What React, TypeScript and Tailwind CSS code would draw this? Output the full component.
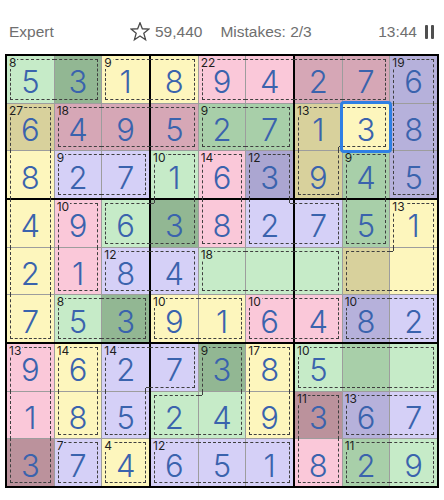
import React from 'react'

type Tone = 'green' | 'yellow' | 'pink' | 'lav'

const DIGITS = [
  '531894276',
  '649527138',
  '827163945',
  '496382751',
  '2184.....',
  '753916482',
  '9627385..',
  '185249367',
  '374651829',
]

// one letter per cage
const CAGES = [
  'AABBCCCCE',
  'FGGGHHIIE',
  'FKKLMNIOE',
  'FPLLMNNOQ',
  'FPRRSSSQQ',
  'FTTUUVVXX',
  'YZaabcddd',
  'YZabbceff',
  'Yghiiiejj',
]

const CAGE_INFO: Record<string, [Tone, number]> = {
  A: ['green', 8], B: ['yellow', 9], C: ['pink', 22], E: ['lav', 19],
  F: ['yellow', 27], G: ['pink', 18], H: ['green', 9], I: ['yellow', 13],
  K: ['lav', 9], L: ['green', 10], M: ['pink', 14], N: ['lav', 12],
  O: ['green', 9], P: ['pink', 10], Q: ['yellow', 13], R: ['lav', 12],
  S: ['green', 18], T: ['green', 8], U: ['yellow', 10], V: ['pink', 10],
  X: ['lav', 10], Y: ['pink', 13], Z: ['yellow', 14], a: ['lav', 14],
  b: ['green', 9], c: ['yellow', 17], d: ['green', 10], e: ['pink', 11],
  f: ['lav', 13], g: ['lav', 7], h: ['yellow', 4], i: ['lav', 12],
  j: ['green', 11],
}

const COLORS: Record<Tone, { base: string; hl: string; same: string }> = {
  green: { base: 'bg-[#c6ebc8]', hl: 'bg-[#a8cfa9]', same: 'bg-[#92b793]' },
  yellow: { base: 'bg-[#fdf6bd]', hl: 'bg-[#d8d19c]', same: 'bg-[#c9c28a]' },
  pink: { base: 'bg-[#fac8d9]', hl: 'bg-[#d6a7b6]', same: 'bg-[#bb929c]' },
  lav: { base: 'bg-[#d5d0f7]', hl: 'bg-[#b6b1db]', same: 'bg-[#aba6d1]' },
}

const SEL = [1, 7]
const LINE = 'absolute border-dashed border-[#3f3f3f]'

function inCage(r: number, c: number, id: string) {
  if (r < 0 || r > 8 || c < 0 || c > 8) return false
  return CAGES[r][c] === id
}

function isFirst(r: number, c: number, id: string) {
  for (let i = 0; i < 81; i++) {
    const rr = Math.floor(i / 9)
    const cc = i % 9
    if (CAGES[rr][cc] === id) return rr === r && cc === c
  }
  return false
}

function CageLines({ r, c, id }: { r: number; c: number; id: string }) {
  const t = !inCage(r - 1, c, id)
  const b = !inCage(r + 1, c, id)
  const l = !inCage(r, c - 1, id)
  const rt = !inCage(r, c + 1, id)

  return (
    <>
      {t && <span className={`${LINE} top-[3px] h-0 border-t ${l ? 'left-[3px]' : '-left-px'} ${rt ? 'right-[3px]' : '-right-px'}`} />}
      {b && <span className={`${LINE} bottom-[3px] h-0 border-b ${l ? 'left-[3px]' : '-left-px'} ${rt ? 'right-[3px]' : '-right-px'}`} />}
      {l && <span className={`${LINE} left-[3px] w-0 border-l ${t ? 'top-[3px]' : '-top-px'} ${b ? 'bottom-[3px]' : '-bottom-px'}`} />}
      {rt && <span className={`${LINE} right-[3px] w-0 border-r ${t ? 'top-[3px]' : '-top-px'} ${b ? 'bottom-[3px]' : '-bottom-px'}`} />}

      {/* inner corners where the cage turns */}
      {!t && !l && !inCage(r - 1, c - 1, id) && (
        <>
          <span className={`${LINE} top-[3px] -left-px w-[4px] h-0 border-t`} />
          <span className={`${LINE} left-[3px] -top-px h-[4px] w-0 border-l`} />
        </>
      )}
      {!t && !rt && !inCage(r - 1, c + 1, id) && (
        <>
          <span className={`${LINE} top-[3px] -right-px w-[4px] h-0 border-t`} />
          <span className={`${LINE} right-[3px] -top-px h-[4px] w-0 border-r`} />
        </>
      )}
      {!b && !l && !inCage(r + 1, c - 1, id) && (
        <>
          <span className={`${LINE} bottom-[3px] -left-px w-[4px] h-0 border-b`} />
          <span className={`${LINE} left-[3px] -bottom-px h-[4px] w-0 border-l`} />
        </>
      )}
      {!b && !rt && !inCage(r + 1, c + 1, id) && (
        <>
          <span className={`${LINE} bottom-[3px] -right-px w-[4px] h-0 border-b`} />
          <span className={`${LINE} right-[3px] -bottom-px h-[4px] w-0 border-r`} />
        </>
      )}
    </>
  )
}

function Cell({ r, c }: { r: number; c: number }) {
  const id = CAGES[r][c]
  const [tone, sum] = CAGE_INFO[id]
  const digit = DIGITS[r][c]
  const selected = r === SEL[0] && c === SEL[1]
  const hl = r === SEL[0] || c === SEL[1] || (r < 3 && c >= 6)
  const same = digit === '3' && !selected
  const bg = selected ? COLORS[tone].base : same ? COLORS[tone].same : hl ? COLORS[tone].hl : COLORS[tone].base

  return (
    <div className={`relative flex items-center justify-center pt-[5px] text-[31px] font-light leading-none text-[#3a63ad] ${bg}`}>
      <CageLines r={r} c={c} id={id} />

      {isFirst(r, c, id) && (
        <span className={`absolute top-[1px] left-[2px] pr-[1px] text-[12px] font-normal leading-[12px] text-[#1e1e1e] ${bg}`}>
          {sum}
        </span>
      )}

      {digit !== '.' && <span>{digit}</span>}

      {selected && <span className="absolute -inset-[3px] z-10 rounded-[4px] border-[3.5px] border-[#2f7fe4]" />}
    </div>
  )
}

function Box({ br, bc }: { br: number; bc: number }) {
  const cells = []
  for (let i = 0; i < 3; i++) {
    for (let j = 0; j < 3; j++) {
      cells.push(<Cell key={`${i}-${j}`} r={br * 3 + i} c={bc * 3 + j} />)
    }
  }
  return <div className="grid h-[142px] grid-cols-3 grid-rows-3 gap-px bg-[#9d9d9d]">{cells}</div>
}

function StarIcon() {
  return (
    <svg width="20" height="20" viewBox="0 0 20 20" className="shrink-0">
      <polygon
        points="10,0.8 12.35,6.76 19.03,7.06 13.8,11.24 15.58,17.69 10,14 4.42,17.69 6.2,11.24 0.97,7.06 7.65,6.76"
        fill="none"
        stroke="#4a4a4a"
        strokeWidth="1.3"
        strokeLinejoin="miter"
      />
    </svg>
  )
}

export default function App() {
  const boxes = []
  for (let i = 0; i < 3; i++) {
    for (let j = 0; j < 3; j++) boxes.push(<Box key={`${i}-${j}`} br={i} bc={j} />)
  }

  return (
    <div className="h-[500px] w-[444px] bg-white font-['Inter',sans-serif]">
      <div className="flex h-[54px] items-center pt-[10px] pl-[9px] pr-[10px] font-['Liberation_Sans',sans-serif] text-[15.5px] text-[#6f6f6f]">
        <span className="w-[121px]">Expert</span>
        <StarIcon />
        <span className="ml-[5px]">59,440</span>
        <span className="ml-[18px]">Mistakes: 2/3</span>
        <span className="ml-auto">13:44</span>
        <span className="ml-[8px] flex gap-[3px]">
          <span className="h-[14px] w-[3px] rounded-[1px] bg-[#4f4f4f]" />
          <span className="h-[14px] w-[3px] rounded-[1px] bg-[#4f4f4f]" />
        </span>
      </div>

      <div className="ml-[5px] grid w-[434px] grid-cols-3 gap-[2px] bg-black p-[2px]">{boxes}</div>
    </div>
  )
}
